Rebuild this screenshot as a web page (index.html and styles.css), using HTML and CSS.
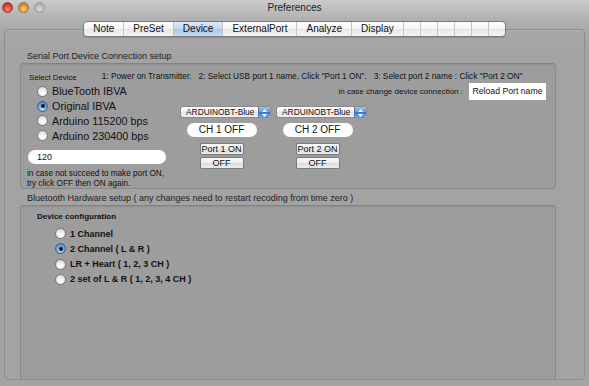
FILE: index.html
```html
<!DOCTYPE html>
<html lang="en">
<head>
    <meta charset="UTF-8">
    <title>Preferences</title>
    <link rel="stylesheet" href="styles.css">
</head>
<body>
    <div class="titlebar">
        <div class="lights">
            <span class="light red"></span>
            <span class="light orange"></span>
            <span class="light off"></span>
        </div>
        <div class="title">Preferences</div>
        <div></div>
    </div>

    <div class="tabview">
        <div class="tabs">
            <span class="tab">Note</span>
            <span class="tab">PreSet</span>
            <span class="tab selected">Device</span>
            <span class="tab">ExternalPort</span>
            <span class="tab">Analyze</span>
            <span class="tab">Display</span>
            <span class="tab blank"></span>
            <span class="tab blank"></span>
            <span class="tab blank"></span>
            <span class="tab blank"></span>
            <span class="tab blank"></span>
            <span class="tab blank"></span>
        </div>

        <div class="group-label">Serial Port Device Connection setup</div>
        <div class="panel serial">
            <div class="serial-head">
                <span class="select-label">Select Device</span>
                <span class="steps">1: Power on Transmitter.   2: Select USB port 1 name, Click "Port 1 ON".   3: Select port 2 name : Click "Port 2 ON"</span>
            </div>
            <div class="serial-body">
                <div class="devices">
                    <div class="radio"><span class="dot"></span>BlueTooth IBVA</div>
                    <div class="radio"><span class="dot on"></span>Original IBVA</div>
                    <div class="radio"><span class="dot"></span>Arduino 115200 bps</div>
                    <div class="radio"><span class="dot"></span>Arduino 230400 bps</div>
                    <div class="field">120</div>
                    <p class="hint">in case not succeed to make port ON,<br>try click OFF then ON again.</p>
                </div>
                <div class="ports">
                    <div class="reload">
                        <span>in case change device connection :</span>
                        <span class="reload-btn">Reload Port name</span>
                    </div>
                    <div class="channels">
                        <div class="channel">
                            <div class="popup">
                                <span class="popup-text">ARDUINOBT-Blue</span>
                                <span class="stepper">
                                    <svg width="11" height="12" viewBox="0 0 11 12"><path d="M3 5 L5.5 2 L8 5 Z M3 7 L5.5 10 L8 7 Z" fill="#fff"/></svg>
                                </span>
                            </div>
                            <div class="status">CH 1 OFF</div>
                            <button class="btn">Port 1 ON</button>
                            <button class="btn off">OFF</button>
                        </div>
                        <div class="channel">
                            <div class="popup">
                                <span class="popup-text">ARDUINOBT-Blue</span>
                                <span class="stepper">
                                    <svg width="11" height="12" viewBox="0 0 11 12"><path d="M3 5 L5.5 2 L8 5 Z M3 7 L5.5 10 L8 7 Z" fill="#fff"/></svg>
                                </span>
                            </div>
                            <div class="status">CH 2 OFF</div>
                            <button class="btn">Port 2 ON</button>
                            <button class="btn off">OFF</button>
                        </div>
                    </div>
                </div>
            </div>
        </div>

        <div class="group-label second">Bluetooth Hardware setup ( any changes need to restart recoding from time zero )</div>
        <div class="panel bluetooth">
            <div class="config-title">Device configuration</div>
            <div class="radio small"><span class="dot"></span>1 Channel</div>
            <div class="radio small"><span class="dot on"></span>2 Channel ( L &amp; R )</div>
            <div class="radio small"><span class="dot"></span>LR + Heart ( 1, 2, 3 CH )</div>
            <div class="radio small"><span class="dot"></span>2 set of L &amp; R ( 1, 2, 3, 4 CH )</div>
        </div>
    </div>
</body>
</html>
```

FILE: styles.css
```css
html, body {
    margin: 0;
    height: 386px;
    overflow: hidden;
}

body {
    background: linear-gradient(#cbcbcb 0, #b2b2b2 18px, #a6a6a6 34px, #a3a3a3 60px);
    font-family: "Liberation Sans", Arial, sans-serif;
    color: #111;
}

/* title bar */
.titlebar {
    display: grid;
    grid-template-columns: 1fr auto 1fr;
    align-items: center;
    height: 15px;
}
.lights {
    display: flex;
    gap: 5px;
    padding-left: 2px;
}
.light {
    width: 11px;
    height: 11px;
    border-radius: 50%;
    box-sizing: border-box;
}
.light.red {
    background: radial-gradient(circle at 50% 70%, #f39a8c 0, #d8483a 45%, #a5271d 100%);
    border: 1px solid #9a3a30;
}
.light.orange {
    background: radial-gradient(circle at 50% 70%, #fbd79b 0, #e69a33 45%, #b06a1a 100%);
    border: 1px solid #a27232;
}
.light.off {
    background: radial-gradient(circle at 50% 70%, #dadada 0, #bababa 50%, #a2a2a2 100%);
    border: 1px solid #999;
}
.title {
    font-size: 10px;
    color: #1e1e1e;
    line-height: 12px;
}

/* tab view */
.tabview {
    margin: 14px 4px 0 4px;
    height: 349px;
    border: 1px solid #8d8d8d;
    border-radius: 4px;
    box-shadow: inset 0 1px 0 #b0b0b0;
}
.tabs {
    display: flex;
    width: max-content;
    margin: -9px auto 0 auto;
    height: 14px;
    border: 1px solid #7a7a7a;
    border-radius: 4px;
    background: linear-gradient(#ffffff, #f3f3f3 50%, #e6e6e6 51%, #f4f4f4);
    overflow: hidden;
    box-shadow: 0 1px 1px rgba(0,0,0,0.15);
}
.tab {
    font-size: 10px;
    line-height: 14px;
    padding: 0 9px;
    border-left: 1px solid #c6c6c6;
}
.tab:first-child {
    border-left: none;
}
.tab.selected {
    background: linear-gradient(#dbe8f7, #c2d8f1 50%, #a9c7ea 51%, #c4dbf3);
}
.tab.blank {
    width: 16px;
    padding: 0;
}

.group-label {
    font-size: 9px;
    line-height: 12px;
    color: #222;
    margin: 13px 0 0 22px;
}
.group-label.second {
    margin-top: 3px;
}

.panel {
    margin: 1px 28px 0 15px;
    background: #9d9d9d;
    border: 1px solid #8a8a8a;
    border-top-color: #828282;
    border-radius: 4px;
    box-sizing: border-box;
    box-shadow: inset 0 1px 1px rgba(0,0,0,0.08);
}
.panel.serial {
    height: 126px;
}
.panel.bluetooth {
    height: 175px;
    padding: 5px 0 0 16px;
}

/* serial section */
.serial-head {
    display: flex;
    align-items: center;
    gap: 25px;
    padding: 6px 0 0 8px;
    height: 12px;
}
.select-label {
    font-size: 7.8px;
    margin-top: 3px;
}
.steps {
    font-size: 8.3px;
    white-space: pre;
}
.serial-body {
    display: flex;
    margin-top: 2px;
}
.devices {
    width: 159px;
    flex-shrink: 0;
}
.radio {
    display: flex;
    align-items: center;
    gap: 4px;
    height: 14.75px;
    padding-left: 16px;
    font-size: 10.8px;
    white-space: nowrap;
}
.dot {
    width: 11px;
    height: 11px;
    flex-shrink: 0;
    box-sizing: border-box;
    border-radius: 50%;
    border: 1px solid #767676;
    background: radial-gradient(circle at 50% 75%, #ffffff 0, #f1f1f1 40%, #cfcfcf 100%);
    display: flex;
    align-items: center;
    justify-content: center;
}
.dot.on {
    border-color: #3a5f94;
    background: radial-gradient(circle at 50% 75%, #c6defa 0, #79aae6 45%, #3d78c8 100%);
}
.dot.on::after {
    content: "";
    width: 4px;
    height: 4px;
    border-radius: 50%;
    background: #151515;
}
.field {
    margin: 7px 0 0 7px;
    width: 138px;
    height: 14px;
    box-sizing: border-box;
    background: #fff;
    border-radius: 7px;
    font-size: 9px;
    line-height: 14px;
    padding-left: 9px;
}
.hint {
    margin: 5px 0 0 6px;
    font-size: 8.2px;
    line-height: 9.5px;
    white-space: nowrap;
}

.ports {
    flex: 1;
    display: flex;
    flex-direction: column;
    padding-right: 9px;
}
.reload {
    align-self: flex-end;
    margin-top: -1px;
    display: flex;
    align-items: center;
    gap: 6px;
    height: 17px;
    font-size: 8px;
    white-space: nowrap;
}
.reload-btn {
    width: 77px;
    height: 17px;
    background: #fff;
    font-size: 8.7px;
    line-height: 17px;
    text-align: center;
}
.channels {
    display: flex;
    gap: 5px;
    margin-top: 6px;
}
.channel {
    width: 91px;
    display: flex;
    flex-direction: column;
    align-items: center;
}
.popup {
    align-self: stretch;
    display: flex;
    height: 12px;
    box-sizing: border-box;
    border: 1px solid #8a8a8a;
    border-radius: 3px;
    background: linear-gradient(#ffffff, #f0f0f0 50%, #e4e4e4 51%, #f2f2f2);
    overflow: hidden;
}
.popup-text {
    flex: 1;
    font-size: 8.4px;
    line-height: 10px;
    padding-left: 5px;
    white-space: nowrap;
    overflow: hidden;
}
.stepper {
    width: 11px;
    flex-shrink: 0;
    background: linear-gradient(#9dc4f1, #5f9ae2 50%, #2f73d4 51%, #6fa8ec);
    border-left: 1px solid #4f76a8;
    display: flex;
}
.status {
    margin: 5px 8px 0 0;
    width: 70px;
    height: 14px;
    background: #fff;
    border-radius: 7px;
    font-size: 10px;
    line-height: 14px;
    text-align: center;
}
.btn {
    margin: 6px 8px 0 0;
    width: 44px;
    height: 12px;
    padding: 0;
    border: 1px solid #7c7c7c;
    border-radius: 2px;
    background: linear-gradient(#fbfbfb, #ededed 50%, #dddddd 51%, #ececec);
    font-family: "Liberation Sans", Arial, sans-serif;
    font-size: 9px;
    line-height: 10px;
    color: #111;
}
.btn.off {
    margin-top: 2px;
}

/* bluetooth section */
.config-title {
    font-size: 8px;
    font-weight: bold;
    line-height: 11px;
    margin-bottom: 4px;
}
.radio.small {
    padding-left: 18px;
    height: 15.25px;
    gap: 4px;
    font-size: 9px;
    font-weight: bold;
}
```
